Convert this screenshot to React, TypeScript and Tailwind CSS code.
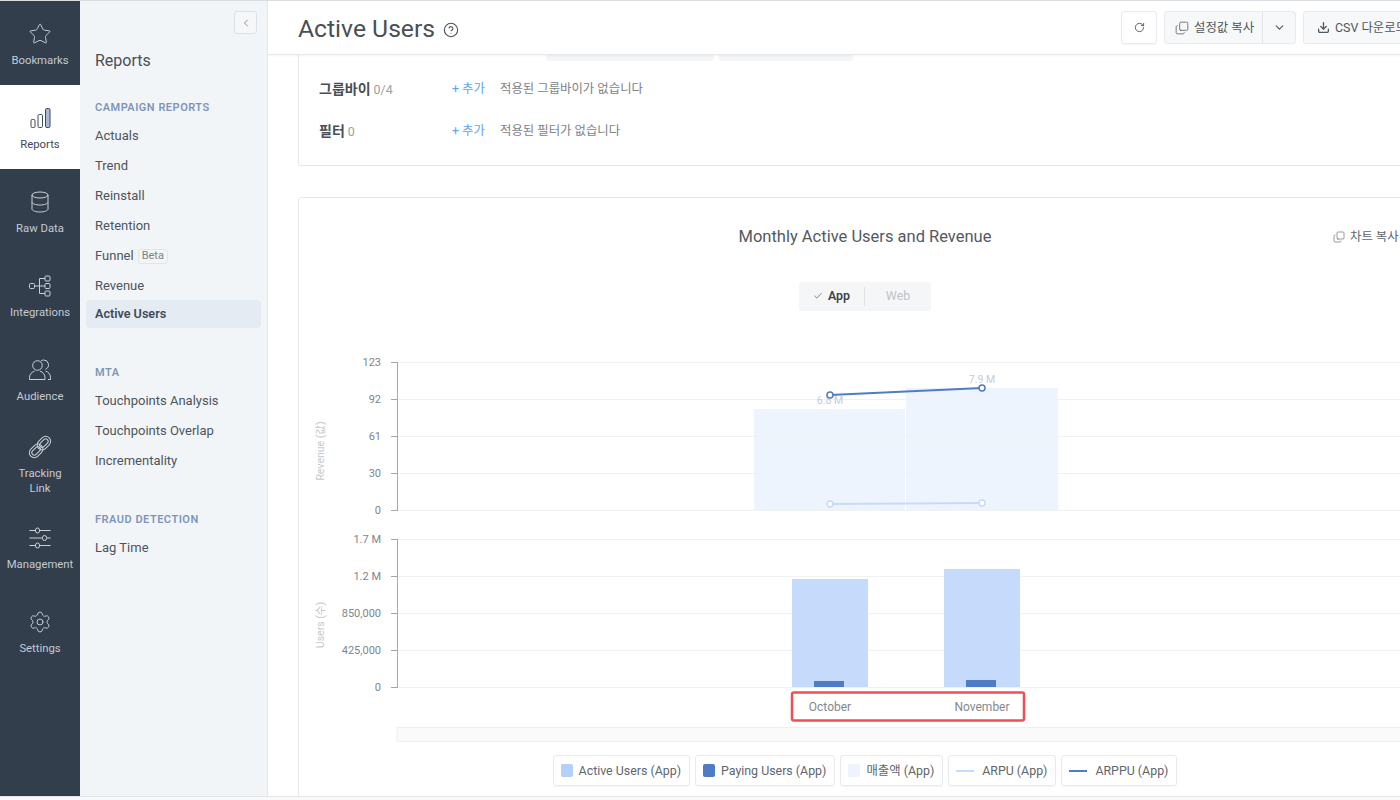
import { Star, Settings, ChevronLeft, ChevronDown, RotateCw, Copy, Download, CircleHelp, Check } from 'lucide-react';
import type { ReactNode } from 'react';

const font = 'font-["Roboto","Noto_Sans_CJK_KR",sans-serif]';

function ReportsIcon() {
    return (
        <svg width="24" height="24" viewBox="0 0 24 24" fill="none" stroke="#3d4a59" strokeWidth="1">
            <rect x="3" y="13.5" width="4" height="8" rx="1.2" />
            <rect x="10" y="8.5" width="4.5" height="13" rx="1.2" />
            <rect x="17.5" y="2.5" width="4.5" height="19" rx="1.2" fill="#a9b9d3" />
        </svg>
    );
}

function DatabaseIcon() {
    return (
        <svg width="24" height="24" viewBox="0 0 24 24" fill="none" stroke="#c9d0d9" strokeWidth="1">
            <ellipse cx="12" cy="5" rx="8" ry="3" />
            <path d="M4 5v14c0 1.7 3.6 3 8 3s8-1.3 8-3V5M4 12c0 1.7 3.6 3 8 3s8-1.3 8-3" />
        </svg>
    );
}

function IntegrationsIcon() {
    return (
        <svg width="24" height="24" viewBox="0 0 24 24" fill="none" stroke="#c9d0d9" strokeWidth="1">
            <rect x="1.5" y="9.5" width="5" height="5" rx="1" />
            <path d="M6.5 12h10.5M11.5 4.5V19.5M11.5 4.5H17M11.5 19.5H17" />
            <rect x="17" y="2" width="5" height="5" rx="1" />
            <rect x="17" y="9.5" width="5" height="5" rx="1" />
            <rect x="17" y="17" width="5" height="5" rx="1" />
        </svg>
    );
}

function AudienceIcon() {
    return (
        <svg width="24" height="24" viewBox="0 0 24 24" fill="none" stroke="#c9d0d9" strokeWidth="1">
            <circle cx="9.5" cy="7.5" r="4.8" />
            <path d="M1.5 21.5v-2c0-3.5 2.5-5.5 5-6.3M12 13.2c2.5.8 5 2.8 5 6.3v2H1.5" />
            <path d="M13 2.9c.8-.6 1.6-.9 2.6-.9a4.8 4.8 0 0 1 2 9.2M17.5 13c2.6.9 5 3 5 6.5v2h-2.5" />
        </svg>
    );
}

function LinkIcon() {
    return (
        <svg width="24" height="24" viewBox="0 0 24 24" fill="none" stroke="#c9d0d9" strokeWidth="1">
            <g transform="rotate(-45 12 12)">
                <rect x="-1" y="7" width="15" height="10" rx="5" />
                <rect x="10" y="7" width="15" height="10" rx="5" />
                <rect x="1.5" y="9.5" width="10" height="5" rx="2.5" />
                <rect x="12.5" y="9.5" width="10" height="5" rx="2.5" />
            </g>
        </svg>
    );
}

function SlidersIcon() {
    return (
        <svg width="24" height="24" viewBox="0 0 24 24" fill="none" stroke="#c9d0d9" strokeWidth="1">
            <path d="M1.5 4.5h6M11.5 4.5h11M1.5 12h13M18.5 12h4M1.5 19.5h6M11.5 19.5h11" />
            <rect x="7.5" y="2" width="4" height="5" rx="2" />
            <rect x="14.5" y="9.5" width="4" height="5" rx="2" />
            <rect x="7.5" y="17" width="4" height="5" rx="2" />
        </svg>
    );
}

function RailItem({ icon, label, active }: { icon: ReactNode; label: ReactNode; active?: boolean }) {
    return (
        <div className={`h-[84px] pt-[4px] flex flex-col items-center justify-center gap-[7px] text-center text-[11.3px] leading-[15px] ${active ? 'bg-white text-[#3d4a59]' : 'text-[#c3cad3]'}`}>
            <div className="h-6 flex items-center justify-center">{icon}</div>
            <div>{label}</div>
        </div>
    );
}

function NavItem({ label, active, badge }: { label: string; active?: boolean; badge?: string }) {
    if (active) {
        return <div className="h-[28px] -mt-px -ml-[9px] pl-[9px] flex items-center rounded bg-[#e5ebf2] text-[12.6px] font-semibold text-[#3d4a59]">{label}</div>;
    }
    return (
        <div className="h-[30px] flex items-center text-[13px] text-[#4d545c]">
            {label}
            {badge && <span className="ml-[4px] px-[3px] h-[15px] flex items-center rounded-[3px] border border-[#e2e6ea] text-[11px] text-[#7b8289]">{badge}</span>}
        </div>
    );
}

function SectionTitle({ children }: { children: string }) {
    return <div className="h-[14px] mb-[6px] flex items-center text-[11px] font-semibold tracking-[0.5px] text-[#7f95b8]">{children}</div>;
}

function FilterRow({ title, count, empty }: { title: string; count: string; empty: string }) {
    return (
        <div className="h-[42px] flex items-center text-[12.4px]">
            <div className="w-[133px] text-[#9aa0a6]">
                <span className="text-[14px] font-semibold text-[#4a4f55]">{title}</span> {count}
            </div>
            <div className="w-[48px] text-[#62a5f0]">+ 추가</div>
            <div className="text-[#7c8288]">{empty}</div>
        </div>
    );
}

function Legend({ swatch, label, gap }: { swatch: ReactNode; label: string; gap: string }) {
    return (
        <div className={`h-[31px] pl-[7px] pr-[8px] flex items-center ${gap} rounded-[3px] border border-[#e8eaed] shadow-[0_1px_1px_rgba(0,0,0,0.04)] text-[12.4px] text-[#5f666d]`}>
            {swatch}
            <span className="mt-px">{label}</span>
        </div>
    );
}

function ChartDrawing() {
    const grid = [362, 399, 436, 473, 510, 539, 576, 613, 650, 687];
    const ticks = [
        { y: 362, t: '123' }, { y: 399, t: '92' }, { y: 436, t: '61' }, { y: 473, t: '30' }, { y: 510, t: '0' },
        { y: 539, t: '1.7 M' }, { y: 576, t: '1.2 M' }, { y: 613, t: '850,000' }, { y: 650, t: '425,000' }, { y: 687, t: '0' },
    ];
    return (
        <svg width="1134" height="395" viewBox="298 350 1134 395" className="block" style={{ fontFamily: 'Roboto, "Noto Sans CJK KR", sans-serif' }}>
            <rect x="754" y="409" width="151" height="102" fill="#edf4fd" />
            <rect x="906" y="388" width="152" height="123" fill="#edf4fd" />
            {grid.map((y) => (
                <line key={y} x1="397" x2="1432" y1={y + 0.5} y2={y + 0.5} stroke="#eff1f3" />
            ))}
            <path d="M397.5 362V511M397.5 539V688" stroke="#a3a8ae" strokeWidth="1" fill="none" />
            {ticks.map((k) => (
                <g key={k.t + k.y}>
                    <line x1="391" x2="397" y1={k.y + 0.5} y2={k.y + 0.5} stroke="#a3a8ae" />
                    <text x="381" y={k.y + 4} textAnchor="end" fontSize="11" fill="#7f858c">{k.t}</text>
                </g>
            ))}
            <text transform="translate(324 451) rotate(-90)" textAnchor="middle" fontSize="10.5" fill="#c4c8cd">Revenue (값)</text>
            <text transform="translate(324 625) rotate(-90)" textAnchor="middle" fontSize="10.5" fill="#c4c8cd">Users (수)</text>

            <rect x="792" y="579" width="76" height="108" fill="#c6dbfb" />
            <rect x="944" y="569" width="76" height="118" fill="#c6dbfb" />
            <rect x="814" y="681" width="30" height="6" fill="#4f7cc4" />
            <rect x="966" y="680" width="30" height="7" fill="#4f7cc4" />

            <text x="830" y="404" textAnchor="middle" fontSize="10.5" fill="#c3cbdc">6.8 M</text>
            <text x="982" y="383" textAnchor="middle" fontSize="10.5" fill="#c3cbdc">7.9 M</text>
            <line x1="830" y1="504" x2="982" y2="503" stroke="#c5dbfb" strokeWidth="2" />
            <circle cx="830" cy="504" r="3" fill="#fff" stroke="#c5dbfb" strokeWidth="1.5" />
            <circle cx="982" cy="503" r="3" fill="#fff" stroke="#c5dbfb" strokeWidth="1.5" />
            <line x1="830" y1="395" x2="982" y2="388" stroke="#4f7cc4" strokeWidth="2" />
            <circle cx="830" cy="395" r="3" fill="#fff" stroke="#4f7cc4" strokeWidth="1.5" />
            <circle cx="982" cy="388" r="3" fill="#fff" stroke="#4f7cc4" strokeWidth="1.5" />

            <text x="830" y="711" textAnchor="middle" fontSize="12" fill="#83898f">October</text>
            <text x="982" y="711" textAnchor="middle" fontSize="12" fill="#83898f">November</text>
            <rect x="792" y="692.5" width="232" height="28" rx="2" fill="none" stroke="#ef4f54" strokeWidth="2.5" />

            <rect x="397" y="727.5" width="1035" height="14" fill="#fafafa" stroke="#eeeff1" />
        </svg>
    );
}

export default function App() {
    return (
        <div className={`w-[1400px] h-[800px] overflow-hidden flex flex-col bg-white border-t border-[#d9dde1] ${font}`}>
            <div className="flex-1 min-h-0 flex">
                <div className="w-[80px] shrink-0 bg-[#323e4c]">
                    <RailItem icon={<Star size={24} strokeWidth={1} />} label="Bookmarks" />
                    <RailItem active icon={<ReportsIcon />} label="Reports" />
                    <RailItem icon={<DatabaseIcon />} label="Raw Data" />
                    <RailItem icon={<IntegrationsIcon />} label="Integrations" />
                    <RailItem icon={<AudienceIcon />} label="Audience" />
                    <RailItem icon={<LinkIcon />} label={<>Tracking<br />Link</>} />
                    <RailItem icon={<SlidersIcon />} label="Management" />
                    <RailItem icon={<Settings size={24} strokeWidth={1} />} label="Settings" />
                </div>

                <div className="w-[188px] shrink-0 bg-[#f2f5f8] border-r border-[#e3e6ea] pl-[15px] pr-[6px]">
                    <div className="h-[10px]" />
                    <div className="flex justify-end pr-[4px]">
                        <div className="w-[23px] h-[23px] flex items-center justify-center rounded-[3px] border border-[#dde1e5] bg-[#f5f7f9] text-[#8d949c]">
                            <ChevronLeft size={12} />
                        </div>
                    </div>
                    <div className="mt-[16px] h-[22px] flex items-center text-[16px] text-[#4a4f55]">Reports</div>
                    <div className="mt-[29px]">
                        <SectionTitle>CAMPAIGN REPORTS</SectionTitle>
                        <NavItem label="Actuals" />
                        <NavItem label="Trend" />
                        <NavItem label="Reinstall" />
                        <NavItem label="Retention" />
                        <NavItem label="Funnel" badge="Beta" />
                        <NavItem label="Revenue" />
                        <NavItem active label="Active Users" />
                    </div>
                    <div className="mt-[38px]">
                        <SectionTitle>MTA</SectionTitle>
                        <NavItem label="Touchpoints Analysis" />
                        <NavItem label="Touchpoints Overlap" />
                        <NavItem label="Incrementality" />
                    </div>
                    <div className="mt-[37px]">
                        <SectionTitle>FRAUD DETECTION</SectionTitle>
                        <NavItem label="Lag Time" />
                    </div>
                </div>

                <div className="flex-1 min-w-0 overflow-hidden">
                    <div className="w-[1152px] h-[54px] pl-[30px] flex items-center border-b border-[#e6e8eb] shadow-[0_1px_2px_rgba(0,0,0,0.05)] relative bg-white">
                        <h1 className="mt-[3px] text-[24.7px] text-[#4a4f55]">Active Users</h1>
                        <CircleHelp size={16} strokeWidth={1.6} className="ml-[8px] mt-[5px] text-[#4a4f55]" />
                        <div className="ml-auto flex gap-[7px] text-[12.4px] text-[#4f565d]">
                            <div className="w-[36px] h-[33px] flex items-center justify-center rounded-[3px] border border-[#e8eaed] shadow-[0_1px_1px_rgba(0,0,0,0.04)]">
                                <RotateCw size={11} strokeWidth={2} />
                            </div>
                            <div className="h-[33px] flex rounded-[3px] border border-[#e8eaed] bg-[#f7f8fa]">
                                <div className="w-[98px] pl-[10px] flex items-center gap-[5px] border-r border-[#e3e5e8]">
                                    <Copy size={14} strokeWidth={1.3} className="-scale-y-100" />
                                    <span className="mt-[2px]">설정값 복사</span>
                                </div>
                                <div className="w-[32px] flex items-center justify-center">
                                    <ChevronDown size={13} />
                                </div>
                            </div>
                            <div className="w-[117px] h-[33px] pl-[13px] flex items-center gap-[5px] rounded-[3px] border border-[#e8eaed] bg-[#f7f8fa]">
                                <Download size={13} strokeWidth={2.4} />
                                <span className="mt-[2px]">CSV 다운로드</span>
                            </div>
                        </div>
                    </div>

                    <div className="w-[1134px] ml-[30px]">
                        <div className="h-[111px] rounded-b-[3px] border border-t-0 border-[#e6e8eb]">
                            <div className="h-[6px] pl-[247px] flex gap-[5px]">
                                <div className="w-[168px] rounded-b-[3px] bg-[#f4f5f7]" />
                                <div className="w-[134px] rounded-b-[3px] bg-[#f4f5f7]" />
                            </div>
                            <div className="mt-[7px] pl-[20px]">
                                <FilterRow title="그룹바이" count="0/4" empty="적용된 그룹바이가 없습니다" />
                                <FilterRow title="필터" count="0" empty="적용된 필터가 없습니다" />
                            </div>
                        </div>

                        <div className="mt-[31px] h-[640px] rounded-t-[3px] border border-[#e6e8eb] relative">
                            <div className="h-[79px] pt-[27px] text-center text-[16.5px] leading-[24px] text-[#54595f]">Monthly Active Users and Revenue</div>
                            <div className="absolute top-[30px] left-[1034px] flex items-center gap-[5px] text-[12.4px] text-[#5f666d]">
                                <Copy size={12} strokeWidth={1.3} className="-scale-y-100" />
                                차트 복사
                            </div>
                            <div className="mt-[5px] mx-auto w-[132px] h-[29px] flex items-center rounded-[3px] bg-[#f5f6f8] text-[12.4px]">
                                <div className="w-[66px] pl-[14px] flex items-center gap-[5px] border-r border-[#dfe1e4] font-semibold text-[#3f444a]">
                                    <Check size={10} strokeWidth={1.5} />
                                    App
                                </div>
                                <div className="flex-1 text-center text-[#c0c3c8]">Web</div>
                            </div>
                            <div className="mt-[39px] -ml-px">
                                <ChartDrawing />
                            </div>
                            <div className="mt-[10px] flex justify-center gap-[5px]">
                                <Legend label="Active Users (App)" gap="gap-[6px]" swatch={<div className="w-[12px] h-[13px] rounded-[2px] bg-[#b3d0f9]" />} />
                                <Legend label="Paying Users (App)" gap="gap-[6px]" swatch={<div className="w-[12px] h-[13px] rounded-[2px] bg-[#4f7cc4]" />} />
                                <Legend label="매출액 (App)" gap="gap-[6px]" swatch={<div className="w-[12px] h-[13px] rounded-[2px] bg-[#edf4fd]" />} />
                                <Legend label="ARPU (App)" gap="gap-[8px]" swatch={<div className="w-[18px] h-[2px] bg-[#c5dbfb]" />} />
                                <Legend label="ARPPU (App)" gap="gap-[8px]" swatch={<div className="w-[18px] h-[2px] bg-[#4f7cc4]" />} />
                            </div>
                        </div>
                    </div>
                </div>
            </div>
            <div className="h-[4px] shrink-0 bg-[#f8f9f9] border-t border-[#e4e6e8]" />
        </div>
    );
}
